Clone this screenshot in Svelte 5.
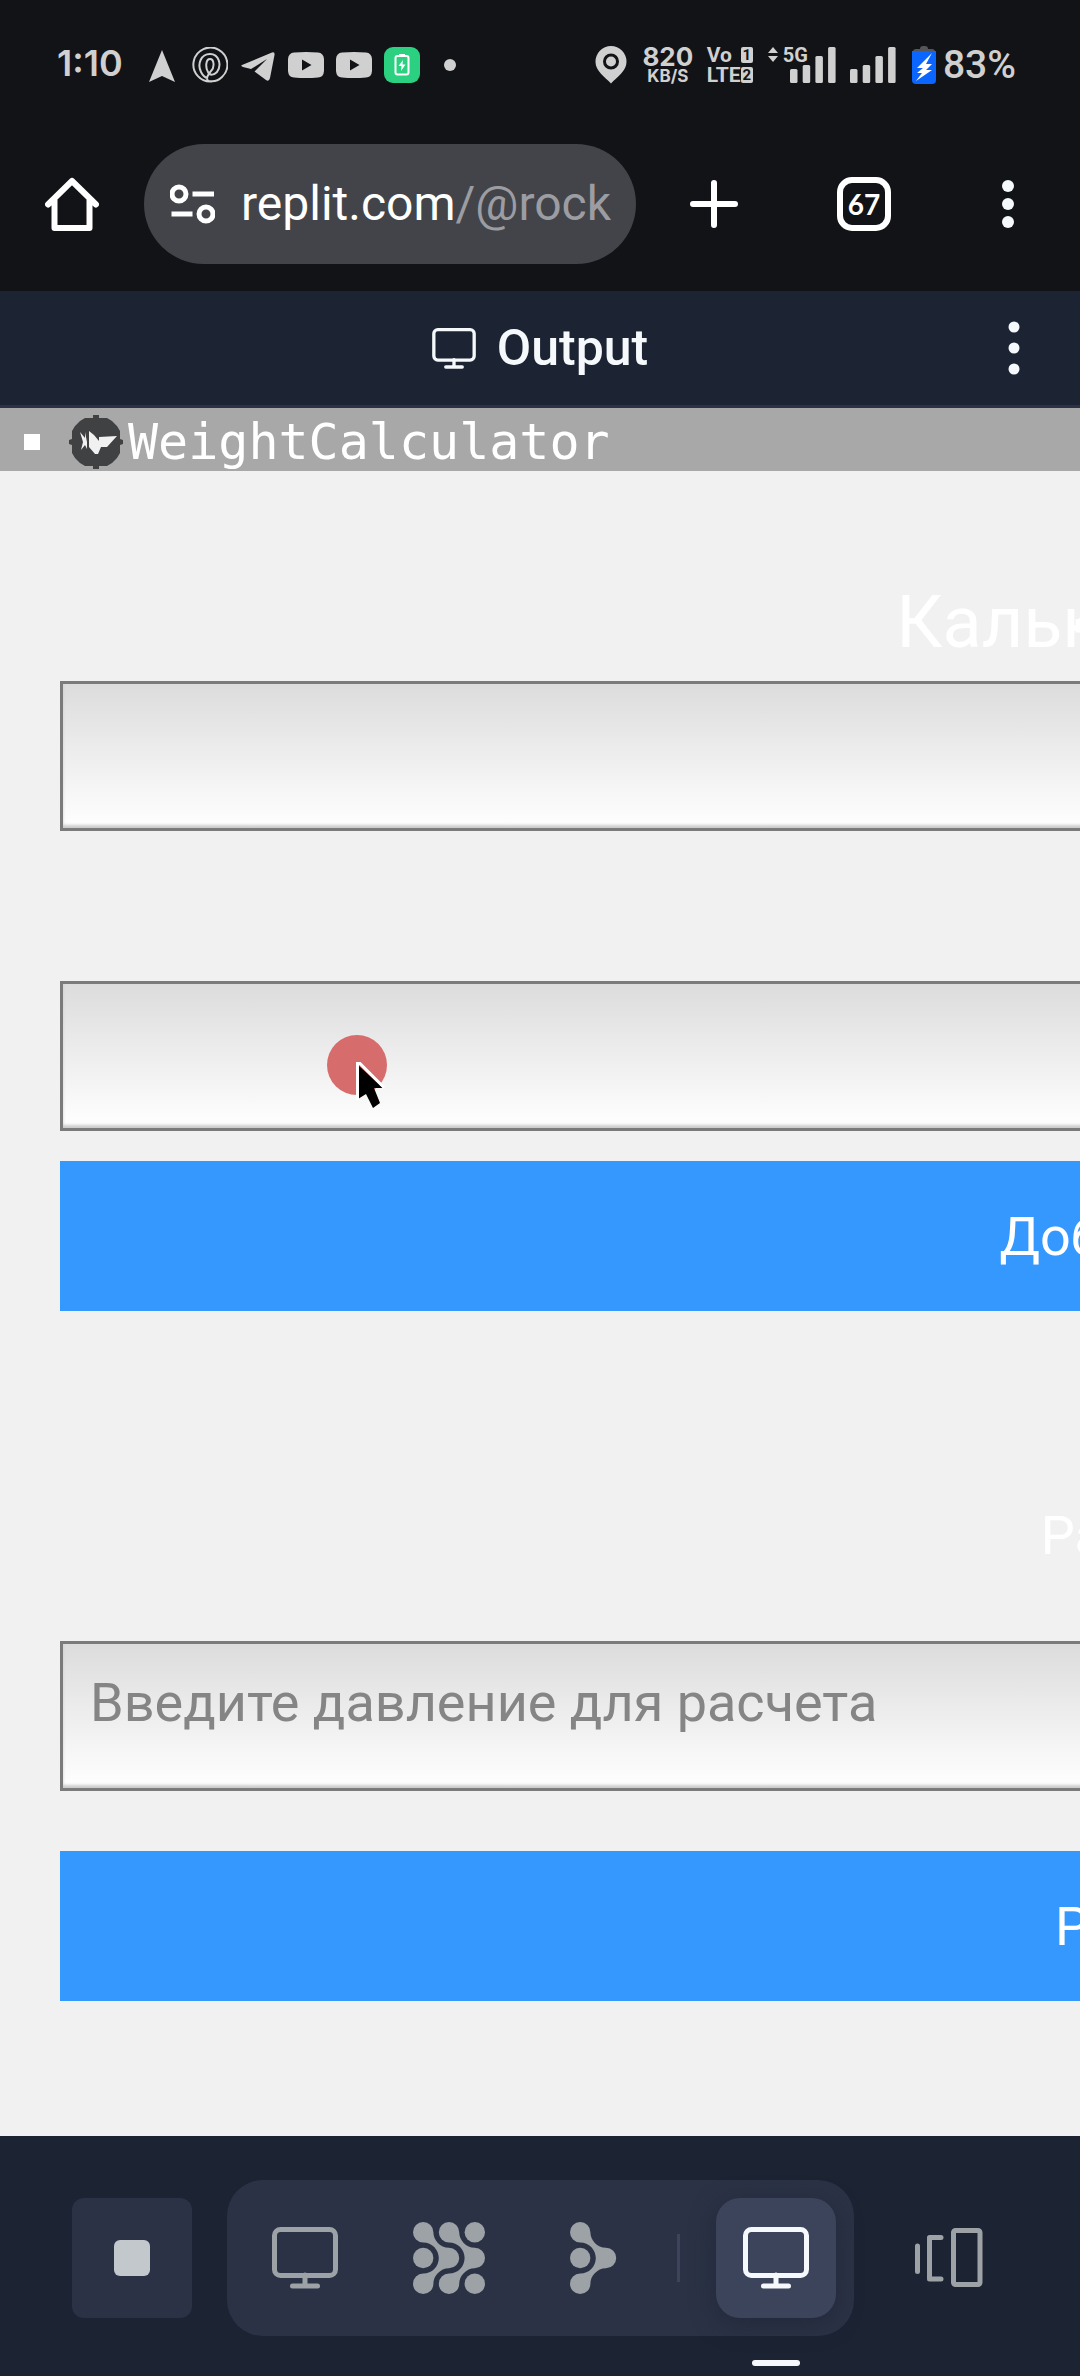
<script>
  const barTops = [22, 18, 9, 0];
  let force = $state('');
  let weight = $state('');
  let pressure = $state('');
</script>

{#snippet monitor()}
  <svg class="monitor" viewBox="0 0 66 62" aria-hidden="true">
    <rect x="2.5" y="2.5" width="61" height="46" rx="6" />
    <path d="M33 48v11M20.500 59h25" />
  </svg>
{/snippet}

{#snippet signal()}
  <svg class="bars" viewBox="0 0 46 36" aria-hidden="true">
    {#each barTops as top, i}
      <rect x={i * 12.7} y={top} width="7.500" height={36 - top} rx="1.500" />
    {/each}
  </svg>
{/snippet}

<div class="phone">
  <header class="status">
    <div class="left">
      <span class="time">1:10</span>
      <svg class="ico wide" viewBox="0 0 26 36" aria-hidden="true"><path d="M13 3 26 35 13 29 0 35Z" /></svg>
      <svg class="ico ring" viewBox="0 0 36 36" aria-hidden="true">
        <path d="M20 34.500A17 17 0 1 1 30 30C27 33 22 35 17 34 13 33 16 27 19 24 23 20 22 12 18 12 14 12 13 20 16 25 18 29 22 28 25 25 30 18 27 7 18 7 9 7 5 17 9 25 11 29 14 31 16 31" />
      </svg>
      <svg class="ico" viewBox="0 0 36 36" aria-hidden="true">
        <path d="M2 18 32 5.500Q35 4.500 34.500 8L30 31Q29 35 26 33L14.500 24.500 27 12 11 22 3 20Q0 19 2 18Z" />
      </svg>
      {#each [1, 2] as n (n)}
        <svg class="ico" viewBox="0 0 36 36" aria-hidden="true">
          <path fill-rule="evenodd" d="M6 5.500Q18 4.500 30 5.500 35.500 6 36 12V24Q35.500 30.500 30 30.500 18 31.500 6 30.500 .5 30.500 0 24V12Q.5 6 6 5.500ZM14 12.500V23.500L23.500 18Z" />
        </svg>
      {/each}
      <svg class="ico" viewBox="0 0 36 36" aria-hidden="true">
        <rect class="green" width="36" height="36" rx="9" />
        <rect class="outline" x="11.500" y="9" width="13" height="18.500" rx="2" />
        <path class="white" d="M15 7h6v2h-6zM19 13 14.500 19H17.500L17 24 21.500 17.500H18.500Z" />
      </svg>
      <span class="dot"></span>
    </div>
    <div class="right">
      <svg class="pin" viewBox="0 0 32 38" aria-hidden="true">
        <path fill-rule="evenodd" d="M16 0A15.500 15.500 0 0 1 31.500 16C31.500 25 22 31 16 37.500 10 31 .5 25 .5 16A15.500 15.500 0 0 1 16 0ZM16 7.500A8 8 0 1 0 16 23.500 8 8 0 1 0 16 7.500Z" />
        <circle cx="16" cy="15.500" r="5" />
      </svg>
      <div class="speed"><b>820</b><small>KB/S</small></div>
      <div class="volte">
        <span>Vo <i>1</i></span>
        <span>LTE<i>2</i></span>
      </div>
      <div class="cell">
        <svg class="updown" viewBox="0 0 10 15" aria-hidden="true"><path d="M5 0 10 6H0ZM0 9H10L5 15Z" /></svg>
        <span class="five">5G</span>
        {@render signal()}
      </div>
      {@render signal()}
      <svg class="battery" viewBox="0 0 24 38" aria-hidden="true">
        <path class="cap" d="M1 6Q1 3 4 3H8Q8 0 11 0H13Q16 0 16 3H20Q23 3 23 6Z" />
        <path class="blue" d="M0 5H24V34Q24 38 20 38H4Q0 38 0 34Z" />
        <path class="white" d="M20 7 5 22H11L5 27 10 27 4 35 20 24H14L20 18H14Z" />
      </svg>
      <span class="percent">83%</span>
    </div>
  </header>

  <nav class="browser">
    <button class="tap" aria-label="Home">
      <svg class="i54 line" viewBox="0 0 54 54"><path d="M3 27.500 27 4 51 27.500M9.500 23V51H44.500V23" /></svg>
    </button>
    <div class="address">
      <svg class="tune" viewBox="0 0 45 40" aria-hidden="true">
        <circle cx="9" cy="10" r="7" /><path d="M22.500 10H44M1.500 30H22.500" /><circle cx="36" cy="30" r="7" />
      </svg>
      <a href="#output">replit.com<span>/@rock</span></a>
    </div>
    <button class="tap plus" aria-label="New tab">
      <svg class="i54 line" viewBox="0 0 54 54"><path d="M27 6V48M6 27H48" /></svg>
    </button>
    <button class="tap tabs" aria-label="Switch tabs"><span>67</span></button>
    <button class="tap more" aria-label="More options">
      <svg class="i54 solid" viewBox="0 0 54 54"><circle cx="27" cy="9" r="6" /><circle cx="27" cy="27" r="6" /><circle cx="27" cy="45" r="6" /></svg>
    </button>
  </nav>

  <div class="pane">
    <h1>{@render monitor()}Output</h1>
    <button class="tap" aria-label="Pane menu">
      <svg class="i54 solid" viewBox="0 0 54 54"><circle cx="27" cy="6" r="5.500" /><circle cx="27" cy="27" r="5.500" /><circle cx="27" cy="48" r="5.500" /></svg>
    </button>
  </div>

  <main class="desktop" id="output">
    <div class="titlebar">
      <span class="knob"></span>
      <svg class="logo" viewBox="0 0 54 54" aria-hidden="true">
        <path class="disc" d="M24 0H30V3H38L43 6 48 11 51 16V24L54 25V29L51 30V38L48 43 43 48 38 51H30V54H24V51H16L11 48 6 43 3 38V30L0 29V25L3 24V16L6 11 11 6 16 3H24Z" />
        <path class="bird" d="M11 17 16 23V17L18 27V34L16 30 12 35 14 27ZM20 16 25 20 30 26V22L48 21 38 32 32 32 29 39H26L20 32Z" />
      </svg>
      <span>WeightCalculator</span>
    </div>
    <form class="sheet" onsubmit={(e) => e.preventDefault()}>
      <div class="heading">
        <h2>Калькулятор веса</h2>
        <label for="force">Давление</label>
      </div>
      <input id="force" bind:value={force} />
      <div class="field">
        <input aria-label="Вес" bind:value={weight} />
        <svg class="pointer" viewBox="0 0 62 74" aria-hidden="true">
          <circle cx="30" cy="30" r="30" />
          <path d="M31 30 56 53H47L53 68 46 73 39 59 31 64Z" />
          <path class="edge" d="M30.500 65V28.500H33L57 52.500" />
        </svg>
      </div>
      <button type="button">Добавить точку</button>
      <h3>Расчет веса:</h3>
      <input placeholder="Введите давление для расчета" aria-label="Введите давление для расчета" bind:value={pressure} />
      <button type="submit" class="calc">Рассчитать</button>
    </form>
  </main>

  <footer class="dock">
    <button class="stop" aria-label="Stop"><span></span></button>
    <div class="tray">
      <button aria-label="Webview">{@render monitor()}</button>
      <button aria-label="Apps">
        <svg class="i72" viewBox="0 0 72 72">
          <circle cx="61.800" cy="10.200" r="10.200" /><circle cx="10.200" cy="36" r="10.200" /><circle cx="61.800" cy="61.800" r="10.200" />
          <path d="M10.200 0A10.200 10.200 0 0 1 20.400 10.200C20.400 18 27 25.800 36 25.800A10.200 10.200 0 0 1 36 46.200C27 46.200 20.400 54 20.400 61.800A10.200 10.200 0 1 1 10.200 51.600C19 51.600 25.800 44.500 25.800 36S19 20.400 10.200 20.400A10.200 10.200 0 0 1 10.200 0Z" />
          <path d="M36 0A10.200 10.200 0 0 1 46.200 10.200C46.200 18 53 25.800 61.800 25.800A10.200 10.200 0 0 1 61.800 46.200C53 46.200 46.200 54 46.200 61.800A10.200 10.200 0 1 1 36 51.600C45 51.600 51.600 44.500 51.600 36S45 20.400 36 20.400A10.200 10.200 0 0 1 36 0Z" />
        </svg>
      </button>
      <button aria-label="Agent">
        <svg class="i72" viewBox="-23 0 72 72">
          <circle cx="0.200" cy="36" r="10.200" />
          <path d="M.2 0A10.200 10.200 0 0 1 10.400 10.200C10.400 18 17 25.800 26 25.800A10.200 10.200 0 0 1 26 46.200C17 46.200 10.400 54 10.400 61.800A10.200 10.200 0 1 1 .2 51.600C9 51.600 15.800 44.500 15.800 36S9 20.400 .2 20.400A10.200 10.200 0 0 1 .2 0Z" />
        </svg>
      </button>
      <span class="divider"></span>
      <button class="active" aria-label="Output" aria-current="page">{@render monitor()}</button>
    </div>
    <button class="panes" aria-label="All panes">
      <svg class="i72 stroke" viewBox="0 0 72 72">
        <path d="M5.500 24V49.500M29 15.500H17.500V57H29" />
        <rect x="41.500" y="8.500" width="26.500" height="54" rx="2" />
      </svg>
    </button>
  </footer>
</div>

<style>
  :global(body) { margin: 0; background: #121317; }
  * { box-sizing: border-box; }
  svg { display: block; flex: none; }
  button { border: 0; padding: 0; background: none; color: inherit; font: inherit; }
  h1, h2, h3 { margin: 0; font-weight: 400; }

  .phone {
    min-height: 100vh;
    display: flex;
    flex-direction: column;
    overflow: hidden;
    font-family: Roboto, "Noto Sans", sans-serif;
    color: #fff;
  }

  .status {
    height: 130px;
    padding: 0 64px 0 57px;
    display: flex;
    align-items: center;
    justify-content: space-between;
    color: #d0d0d0;
    fill: #d0d0d0;
  }
  .left, .right { display: flex; align-items: center; }
  .left { gap: 12px; }
  .time { width: 80px; padding-bottom: 4px; font: 600 36px/40px Inter, sans-serif; white-space: nowrap; }
  .ico { width: 36px; height: 36px; }
  .wide { width: 26px; margin-right: 5px; }
  .ring { fill: none; stroke: #d0d0d0; stroke-width: 2; }
  .green { fill: #2bd180; }
  .outline { fill: none; stroke: #fff; stroke-width: 2; }
  .white { fill: #fff; }
  .dot { width: 12px; height: 12px; margin-left: 12px; border-radius: 50%; background: #d0d0d0; }
  .pin { width: 32px; height: 38px; margin-right: 16px; }
  .speed { width: 50px; margin-right: 14px; display: flex; flex-direction: column; align-items: center; font-family: Inter, sans-serif; }
  .speed b { font-size: 26px; line-height: 22px; font-weight: 700; }
  .speed small { font-size: 17px; line-height: 16px; font-weight: 700; }
  .volte { width: 46px; margin-right: 15px; font-size: 21px; line-height: 20px; font-weight: 700; }
  .volte span { display: flex; justify-content: space-between; align-items: center; }
  .volte i { width: 12px; height: 16px; background: #d0d0d0; color: #121317; font: 700 15px/16px Roboto, sans-serif; text-align: center; border-radius: 2px; }
  .cell { display: flex; align-items: flex-start; margin-right: 14px; }
  .updown { width: 10px; height: 15px; margin-right: 5px; }
  .five { font-size: 20px; line-height: 16px; font-weight: 700; margin-right: -18px; }
  .bars { width: 46px; height: 36px; }
  .battery { width: 24px; height: 38px; margin: 0 7px 0 16px; }
  .cap { fill: #55565a; }
  .blue { fill: #0a66ff; }
  .percent { font-size: 39px; line-height: 40px; font-weight: 500; }

  .browser {
    height: 161px;
    padding: 14px 36px 27px;
    display: flex;
    align-items: center;
  }
  .tap { width: 72px; height: 72px; flex: none; display: grid; place-items: center; }
  .i54 { width: 54px; height: 54px; }
  .line { fill: none; stroke: #fff; stroke-width: 6; stroke-linecap: round; stroke-linejoin: round; }
  .solid { fill: #f5f9fc; }
  .address {
    flex: 1;
    min-width: 0;
    height: 120px;
    margin-left: 36px;
    padding: 0 24px 0 26px;
    border-radius: 60px;
    background: #434449;
    display: flex;
    align-items: center;
    gap: 26px;
  }
  .tune { width: 45px; height: 40px; fill: none; stroke: #fff; stroke-width: 5; }
  .address a { color: #fff; text-decoration: none; font-size: 48px; line-height: 60px; white-space: nowrap; }
  .address span { color: #9c9da2; }
  .plus { margin-left: 42px; }
  .tabs { margin-left: 78px; }
  .tabs span {
    width: 54px;
    height: 54px;
    border: 6px solid #fff;
    border-radius: 15px;
    font: 700 28px/42px Lato, sans-serif;
    text-align: center;
  }
  .more { margin-left: 72px; }

  .pane {
    height: 117px;
    padding: 0 30px 0 102px;
    border-bottom: 3px solid #2b3245;
    background: #1c2333;
    display: flex;
    align-items: center;
    color: #f5f9fc;
  }
  .pane h1 {
    flex: 1;
    display: flex;
    align-items: center;
    justify-content: center;
    gap: 21px;
    font-size: 50px;
    line-height: 60px;
    font-weight: 500;
  }
  .monitor { width: 66px; height: 62px; fill: none; stroke: currentColor; stroke-width: 5; stroke-linecap: round; }
  .pane .monitor { width: 44px; height: 41px; }

  .desktop { flex: 1; background: #f1f1f1; overflow: hidden; }
  .titlebar {
    height: 63px;
    padding: 4px 0 0 24px;
    background: #a8a8a8;
    display: flex;
    align-items: center;
    font: 50px/58px "DejaVu Sans Mono", monospace;
  }
  .knob { width: 16px; height: 16px; background: #fff; margin-right: 29px; }
  .logo { width: 54px; height: 54px; margin-right: 5px; }
  .disc { fill: #404143; }
  .bird { fill: #f1f1f1; }
  /* The remote window is wider than the screen and runs off its right edge. */
  .sheet {
    width: 2400px;
    padding: 104px 60px 0;
    display: flex;
    flex-direction: column;
    font-size: 54px;
  }
  /* The first field's label shares the title's cell. */
  .heading { display: grid; justify-items: center; margin-bottom: 10px; }
  .heading > * { grid-area: 1 / 1; }
  .heading label { line-height: 60px; }
  .sheet h2 { font-size: 72px; line-height: 96px; }
  .sheet input {
    width: 100%;
    height: 150px;
    padding: 0 27px 27px;
    border: 3px solid #7b7b7b;
    border-radius: 0;
    background: linear-gradient(#dcdcdc, #fff);
    box-shadow: inset 0 -3px 3px #ccc;
    font: inherit;
    color: #222;
    display: block;
  }
  .sheet input::placeholder { color: #858585; opacity: 1; }
  .field { position: relative; margin: 150px 0 30px; }
  .pointer { position: absolute; left: 267px; top: 54px; width: 62px; height: 74px; }
  .pointer circle { fill: #d66c6c; }
  .pointer .edge { fill: none; stroke: #fff; stroke-width: 3; }
  .sheet button { height: 150px; background: #3498ff; }
  .sheet h3 { font-size: 54px; line-height: 66px; text-align: center; margin: 192px 0 72px; }
  .sheet .calc { margin-top: 60px; }

  .dock {
    height: 240px;
    padding: 44px 72px 40px;
    background: #1c2333;
    display: flex;
    align-items: center;
    justify-content: space-between;
    color: #9da2a6;
  }
  .dock button { width: 120px; height: 120px; flex: none; display: grid; place-items: center; }
  .dock .stop { border-radius: 12px; background: #2b3245; }
  .stop span { width: 36px; height: 36px; border-radius: 6px; background: #c2c8cc; }
  .tray {
    height: 156px;
    padding: 0 18px;
    border-radius: 36px;
    background: #2b3245;
    display: flex;
    align-items: center;
    gap: 24px;
  }
  .i72 { width: 72px; height: 72px; fill: currentColor; }
  .stroke { fill: none; stroke: currentColor; stroke-width: 5; stroke-linecap: round; stroke-linejoin: round; }
  .divider { width: 3px; height: 48px; margin-right: 12px; background: #3c445c; }
  .dock .active {
    position: relative;
    border-radius: 24px;
    background: #3c445c;
    color: #f5f9fc;
    box-shadow: 0 6px 24px #1c233399;
  }
  .active::after {
    content: "";
    position: absolute;
    left: 36px;
    bottom: -48px;
    width: 48px;
    height: 6px;
    border-radius: 3px;
    background: #f5f9fc;
  }
</style>
